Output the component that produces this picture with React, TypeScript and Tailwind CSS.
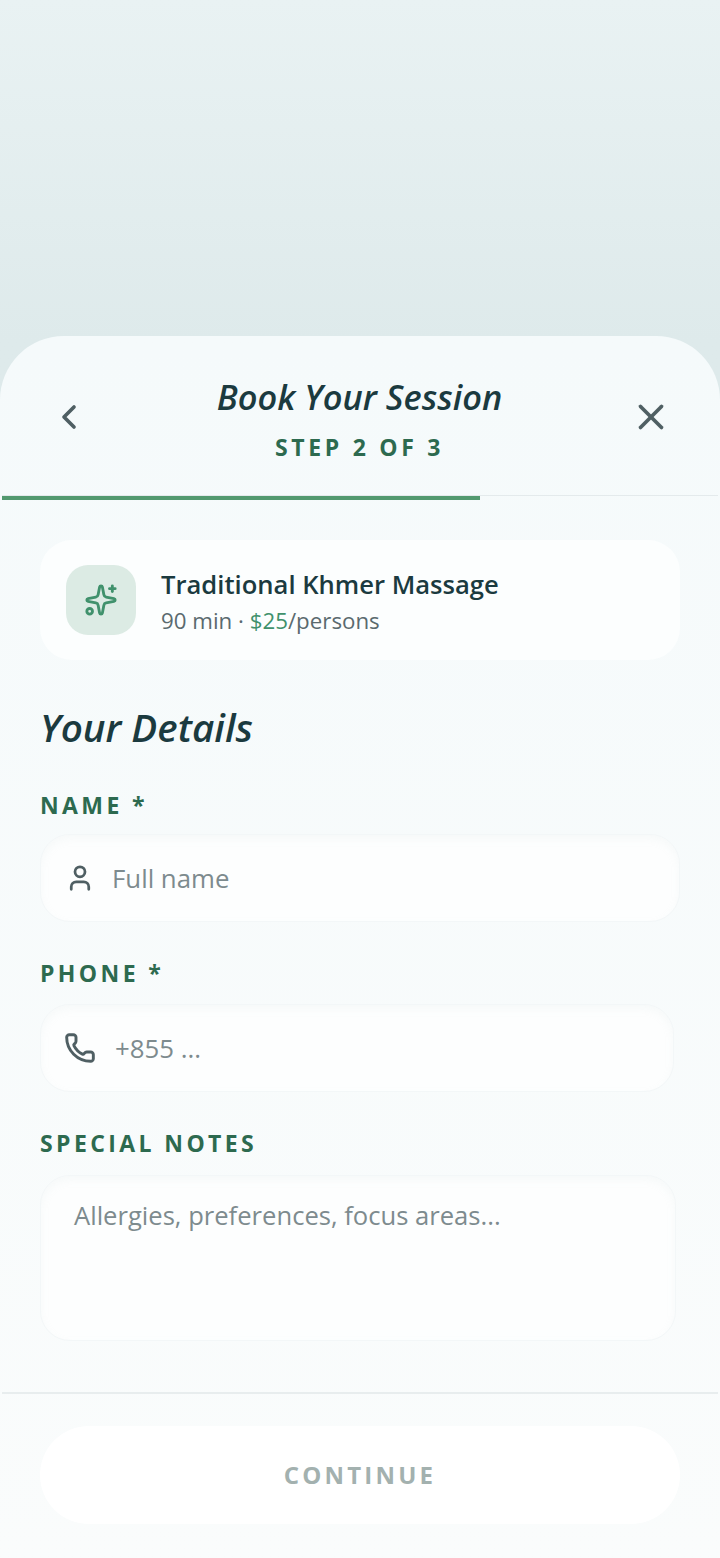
import { ChevronLeft, Phone, Sparkles, User, X } from 'lucide-react';

const font = { fontFamily: '"Open Sans", "Noto Sans", sans-serif' };

function FieldLabel({ children }: { children: string }) {
  return (
    <div className="h-[28px] text-[23px] leading-[28px] font-bold tracking-[3.4px] text-[#2d6a4f]">
      {children}
    </div>
  );
}

function Field({ icon, placeholder, className }: { icon: React.ReactNode; placeholder: string; className: string }) {
  return (
    <div className={`flex h-[88px] items-center rounded-[30px] border border-[#f3f7f8] bg-[#fdfefe] pl-[22px] shadow-[inset_0_4px_8px_rgba(190,205,210,0.10)] ${className}`}>
      <div className="flex w-[34px] justify-center text-[#4f5f63]">{icon}</div>
      <span className="text-[25.8px] leading-[34px] text-[#7d8b8e]">{placeholder}</span>
    </div>
  );
}

export default function App() {
  return (
    <div style={font} className="flex min-h-[1558px] w-[720px] flex-col overflow-hidden bg-gradient-to-b from-[#e9f2f3] to-[#deeaeb] to-[22%]">
      <div className="h-[336px] shrink-0" />

      <div className="flex h-[1222px] flex-col rounded-t-[64px] bg-gradient-to-b from-[#f5fafb] to-[#fafcfc] px-[2px]">
        <header className="flex h-[159px] items-start justify-between">
          <button className="ml-[47px] mt-[61px] text-[#4f5f63]">
            <ChevronLeft size={40} strokeWidth={2.2} />
          </button>
          <div className="pt-[38px] text-center">
            <h1 className="text-[34.4px] leading-[46px] font-semibold italic text-[#1b3a3f]">Book Your Session</h1>
            <p className="mt-[12px] text-[23px] leading-[30px] font-bold tracking-[3.7px] text-[#2d6a4f]">STEP 2 OF 3</p>
          </div>
          <button className="mr-[46px] mt-[60px] text-[#4f5f63]">
            <X size={42} strokeWidth={2.1} />
          </button>
        </header>

        <div className="relative h-[6px] border-t-[1.5px] border-[#e4eaec]">
          <div className="h-[4px] w-[478px] bg-[#52996f]" />
        </div>

        <main className="flex-1 px-[38px] pt-[39px]">
          <section className="flex h-[120px] items-center rounded-[32px] bg-[#fcfefe] pl-[26px]">
            <div className="flex h-[70px] w-[70px] items-center justify-center rounded-[22px] bg-[#dcebe4] text-[#40916c]">
              <Sparkles size={34} strokeWidth={2} />
            </div>
            <div className="ml-[25px] pt-[2px]">
              <div className="text-[25.6px] leading-[36px] font-semibold text-[#1b3a3f]">Traditional Khmer Massage</div>
              <div className="mt-[3px] text-[22.3px] leading-[30px] text-[#5a6a6e]">
                90 min · <span className="text-[#40916c]">$25</span>/persons
              </div>
            </div>
          </section>

          <h2 className="mt-[43px] text-[38.6px] leading-[48px] font-semibold italic text-[#1b3a3f]">Your Details</h2>

          <div className="mt-[40px]">
            <FieldLabel>NAME *</FieldLabel>
            <div className="mt-[15px]">
              <Field icon={<User size={30} strokeWidth={2.2} />} placeholder="Full name" className="w-full gap-[15px]" />
            </div>
          </div>
          <div className="mt-[37px]">
            <FieldLabel>PHONE *</FieldLabel>
            <div className="mt-[17px]">
              <Field icon={<Phone size={32} strokeWidth={2.2} />} placeholder="+855 ..." className="w-[634px] gap-[18px]" />
            </div>
          </div>
          <div className="mt-[37px]">
            <FieldLabel>SPECIAL NOTES</FieldLabel>
            <div className="mt-[18px] h-[166px] w-[636px] rounded-[30px] border border-[#f3f7f8] bg-[#fdfefe] pl-[33px] pt-[22px] text-[25.6px] leading-[36px] text-[#7d8b8e] shadow-[inset_0_4px_8px_rgba(190,205,210,0.10)]">
              Allergies, preferences, focus areas...
            </div>
          </div>
        </main>

        <footer className="h-[166px] border-t-2 border-[#e8edee] px-[38px] pt-[32px]">
          <button className="flex h-[98px] w-full items-center justify-center rounded-full bg-white text-[24px] font-bold tracking-[3.2px] text-[#a3b1af]">
            CONTINUE
          </button>
        </footer>
      </div>
    </div>
  );
}
